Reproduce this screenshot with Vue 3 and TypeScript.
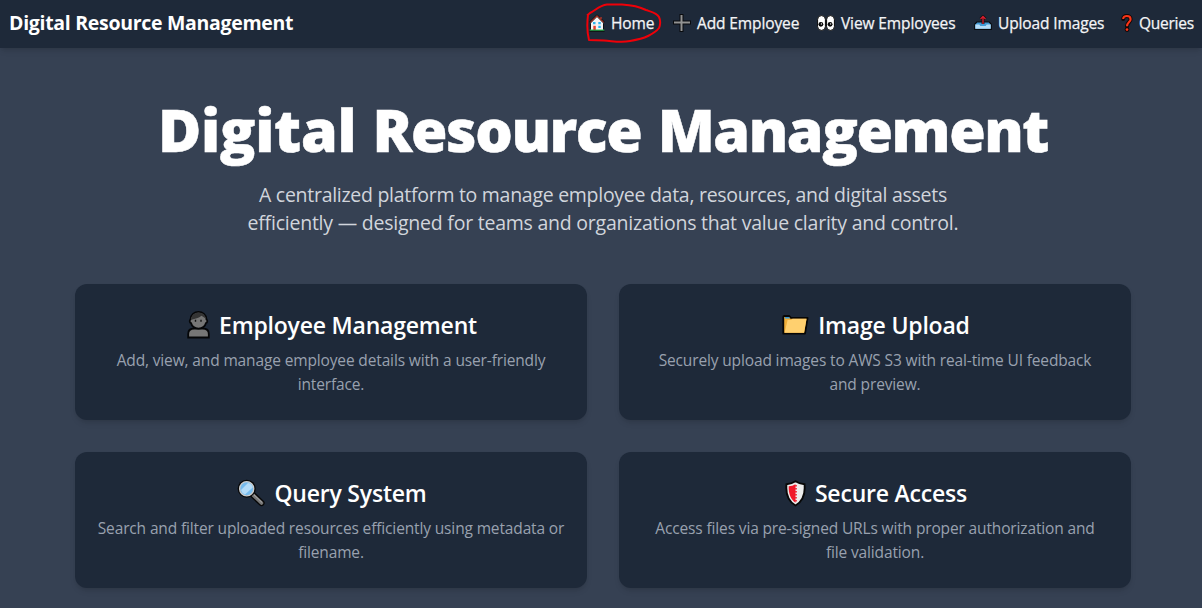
<script setup lang="ts">
interface NavItem {
  icon: string
  label: string
}
interface Card {
  icon: string
  title: string
  lines: string[]
}

const navItems: NavItem[] = [
  { icon: 'home', label: 'Home' },
  { icon: 'plus', label: 'Add Employee' },
  { icon: 'eyes', label: 'View Employees' },
  { icon: 'upload', label: 'Upload Images' },
  { icon: 'question', label: 'Queries' },
]

const cards: Card[] = [
  {
    icon: 'person',
    title: 'Employee Management',
    lines: ['Add, view, and manage employee details with a user-friendly', 'interface.'],
  },
  {
    icon: 'folder',
    title: 'Image Upload',
    lines: ['Securely upload images to AWS S3 with real-time UI feedback', 'and preview.'],
  },
  {
    icon: 'search',
    title: 'Query System',
    lines: ['Search and filter uploaded resources efficiently using metadata or', 'filename.'],
  },
  {
    icon: 'shield',
    title: 'Secure Access',
    lines: ['Access files via pre-signed URLs with proper authorization and', 'file validation.'],
  },
]
</script>

<template>
  <div class="page">
    <header class="nav">
      <div class="brand">Digital Resource Management</div>
      <nav class="links">
        <a v-for="item in navItems" :key="item.label" class="link" :class="item.icon">
          <svg v-if="item.icon === 'home'" width="16" height="18" viewBox="0 0 16 18">
            <path d="M1.2 8.6 8 1.8l6.800 6.800" fill="none" stroke="#111" stroke-width="2.600" stroke-linejoin="round" />
            <path d="M2 9v7h12V9L8 3z" fill="#f4f4f4" />
            <path d="M1.3 8.3 8 1.7l6.7 6.6M12 3v2" fill="none" stroke="#e6402e" stroke-width="1" />
            <path d="M4 8h2.500v2.200H4zM9.300 8h2.500v2.200H9.300zM9.300 11.800h2.500V14H9.300z" fill="#2db4ee" />
            <path d="M4.300 11.800h2.500V16H4.300z" fill="#e6402e" />
            <path d="M.7 16.2h14.6" stroke="#27b34a" stroke-width="1.3" />
            <path d="M.5 17.3h15M1.500 10v5M14.500 10v5" stroke="#111" />
          </svg>
          <svg v-else-if="item.icon === 'plus'" width="18" height="18" viewBox="0 0 18 18">
            <path d="M8.500 0v18M0 8.500h18" stroke="#090b0e" stroke-width="4" />
            <path d="M8.500 1v16M1 8.500h16" stroke="#929292" stroke-width="2" />
          </svg>
          <svg v-else-if="item.icon === 'eyes'" width="18" height="16" viewBox="0 0 18 16">
            <g fill="#fff" stroke="#080808" stroke-width="1">
              <rect x=".6" y=".6" width="7.800" height="14.800" rx="3.900" />
              <rect x="9.600" y=".6" width="7.800" height="14.800" rx="3.900" />
            </g>
            <circle cx="3.900" cy="9.300" r="2.400" fill="#050505" />
            <circle cx="13.100" cy="9.300" r="2.400" fill="#050505" />
            <circle cx="4.400" cy="8.900" r=".7" fill="#fff" />
            <circle cx="13.600" cy="8.900" r=".7" fill="#fff" />
          </svg>
          <svg v-else-if="item.icon === 'upload'" width="18" height="15" viewBox="0 0 18 15">
            <path d="M3 6.800h12l2.300 2.500v5H.7v-5z" fill="#429bd7" stroke="#090b0e" stroke-width="1.200" />
            <path d="M1.300 9.600h4l1 1.400h5.400l1-1.400h4v4.100H1.300z" fill="#b5dcf7" />
            <path d="M9 1.500v7.500M6.500 4 9 1.500 11.500 4" fill="none" stroke="#111" stroke-width="2.800" />
            <path d="M9 1.500V9M6.500 4 9 1.500 11.500 4" fill="none" stroke="#d81d2e" stroke-width="1.300" />
          </svg>
          <svg v-else width="12" height="18" viewBox="0 0 12 18">
            <path d="M2.200 5C2.200 .9 9.600 1 9.600 5.200 9.600 8 6 8.200 6 12.300" fill="none" stroke="#120606" stroke-width="4" stroke-linecap="round" />
            <circle cx="6" cy="15.600" r="2.300" fill="#120606" />
            <path d="M2.200 5C2.200 .9 9.600 1 9.600 5.200 9.600 8 6 8.200 6 12.300" fill="none" stroke="#fb3517" stroke-width="2.100" />
            <circle cx="6" cy="15.600" r="1.350" fill="#fb3517" />
          </svg>
          <span>{{ item.label }}</span>
        </a>
      </nav>
      <svg class="scribble" width="78" height="44" viewBox="0 0 78 44">
        <path d="M1 14.500L4 12C9 10 13 4.500 21 3.500L36 3.500C44 4 52 5 60 9C66 11 71 12 73 16C75 20 74 25 73 27C70 31 66 33 62 35C56 38 50 39 44 40C35 42 27 40 18 39.500L3 39C1 31 1 22 2 14" fill="none" stroke="#f00008" stroke-width="2" stroke-linejoin="round" />
      </svg>
    </header>

    <main class="main">
      <h1 class="hero"><span class="word-a">Digital</span> <span class="word-b">Resource</span> <span class="word-c">Management</span></h1>
      <p class="subtitle">
        <span class="sub-a">A centralized platform to manage employee data, resources, and digital assets</span><br />
        <span class="sub-b">efficiently — designed for teams and organizations that value clarity and control.</span>
      </p>
      <section class="grid">
        <article v-for="card in cards" :key="card.title" class="card" :class="card.icon">
          <h3 class="card-title">
            <svg v-if="card.icon === 'person'" width="23" height="28" viewBox="0 0 23 28">
              <path d="M1.200 26.500V23c0-4 3-5.500 6-5.500h8.600c3 0 6 1.500 6 5.500v3.500z" fill="#767676" stroke="#050608" stroke-width="1.800" />
              <path d="M3.500 8.500C3.500-1.600 19.500-1.600 19.500 8.500c1.200.5 1 3.400-.5 3.600-2 7.300-13 7.300-15 0-1.500-.2-1.700-3.100-.5-3.600z" fill="#767676" stroke="#050608" stroke-width="1.800" />
              <path d="M4.400 8.800C3.800-.6 18-.8 18.700 7.500L14.500 4.800C12 7 8 7.800 4.400 8.800z" fill="#343434" />
              <path d="M8.500 8.800v2M14 8.800v2" stroke="#111" stroke-width="1.400" />
            </svg>
            <svg v-else-if="card.icon === 'folder'" width="27" height="20" viewBox="0 0 27 20">
              <path d="M1.300 18.700V2q0-1 1-1h5l1.600 1.800H25.600L23 18.700z" fill="#f0ae38" stroke="#060606" stroke-width="1.800" stroke-linejoin="round" />
              <path d="M3 2h4l1.200 1.500H3z" fill="#3997d3" />
              <path d="M5.600 5H9l1.500-1.300h14L22 17.800H2.600z" fill="#ffd06f" />
            </svg>
            <svg v-else-if="card.icon === 'search'" width="28" height="28" viewBox="0 0 28 28">
              <path d="m15 15 9.500 9" stroke="#070707" stroke-width="6.200" stroke-linecap="round" />
              <path d="m15 15 9.500 9" stroke="#777" stroke-width="3.600" stroke-linecap="round" />
              <path d="m17 15.800 8 7.600" stroke="#aaa" stroke-width="1" />
              <circle cx="9.700" cy="9.700" r="9" fill="#070707" />
              <circle cx="9.700" cy="9.700" r="7.100" fill="#76bbed" stroke="#ccc" stroke-width="1.300" />
              <path d="m4 11 7-7a6 6 0 0 1 4.700 4.500L8 15.400A6 6 0 0 1 4 11z" fill="#b4dcf8" />
            </svg>
            <svg v-else width="21" height="27" viewBox="0 0 21 27">
              <path d="M10.500 1.300Q14.500 4 19.500 4.200C20.500 14 17.500 21.500 10.500 25.500 3.500 21.500.5 14 1.500 4.200 6.500 4 10.500 1.300 10.500 1.300z" fill="#ececec" stroke="#080808" stroke-width="1.900" />
              <path d="M10.500 4.200V22.800C5.300 19 3.500 13 3.700 6.200Q7.500 6 10.500 4.200z" fill="#f01829" />
              <path d="M11 5v17" stroke="#f01829" stroke-width="1.600" stroke-dasharray="1.500 1.500" />
            </svg>
            <span>{{ card.title }}</span>
          </h3>
          <p class="desc">
            <template v-for="(line, i) in card.lines" :key="line"><br v-if="i > 0" /><span>{{ line }}</span></template>
          </p>
        </article>
      </section>
    </main>
  </div>
</template>

<style>
body {
  background: #364153;
}
</style>

<style scoped>
.page {
  height: 608px;
  overflow: hidden;
  background: #364153;
  color: #fff;
  font-family: 'Open Sans', 'Noto Sans', sans-serif;
}
.nav {
  position: relative;
  height: 48px;
  box-sizing: border-box;
  padding: 0 9px 3px 9px;
  display: flex;
  align-items: center;
  justify-content: space-between;
  background: #1e2939;
  box-shadow: 0 4px 6px -1px rgb(0 0 0 / 0.1), 0 2px 4px -2px rgb(0 0 0 / 0.1);
}
.brand {
  font-size: 19.5px;
  font-weight: 700;
  letter-spacing: -0.3px;
  white-space: nowrap;
}
.links {
  display: flex;
}
.link {
  display: flex;
  align-items: center;
  font-size: 15.5px;
  font-weight: 500;
  color: #f3f4f6;
  white-space: nowrap;
}
.link svg {
  flex: none;
}
.link span {
  letter-spacing: -0.12px;
  -webkit-text-stroke: 0.25px currentColor;
}
.link.home { width: 84px; }
.link.home svg { margin-right: 6px; }
.link.plus { width: 144px; }
.link.plus svg { margin-right: 6px; }
.link.eyes { width: 157px; }
.link.eyes svg { margin-right: 6px; }
.link.upload { width: 147px; }
.link.upload svg { margin-right: 6px; }
.link.question { width: 72px; }
.link.question svg { margin-right: 6px; }
.link.question span { letter-spacing: -0.25px; }
.scribble {
  position: absolute;
  left: 586px;
  top: 1px;
}
.main {
  width: 1056px;
  margin-left: 75px;
  padding-top: 51px;
  text-align: center;
}
.hero {
  margin: 0 0 22px;
  font-size: 59px;
  line-height: 60px;
  font-weight: 800;
  white-space: nowrap;
  word-spacing: 1px;
  -webkit-text-stroke: 0.5px #fff;
}
.word-a {
  letter-spacing: -0.3px;
}
.word-b {
  letter-spacing: -1.4px;
}
.word-c {
  letter-spacing: -1.4px;
}
.subtitle {
  margin: 0 0 47px;
  font-size: 19.5px;
  line-height: 28px;
  color: #d1d5dc;
  white-space: nowrap;
}
.sub-a {
  letter-spacing: -0.28px;
}
.sub-b {
  letter-spacing: -0.23px;
}
.grid {
  display: grid;
  grid-template-columns: 512px 512px;
  gap: 32px;
}
.card {
  height: 136px;
  box-sizing: border-box;
  padding: 25px 0 23px;
  border-radius: 12px;
  background: #1e2939;
  box-shadow: 0 4px 6px -1px rgb(0 0 0 / 0.1), 0 2px 4px -2px rgb(0 0 0 / 0.1);
}
.card-title {
  margin: 0 0 7px;
  padding-left: 2px;
  display: flex;
  align-items: center;
  justify-content: center;
  gap: 9px;
  font-size: 23px;
  line-height: 32px;
  font-weight: 600;
}
.card-title span {
  letter-spacing: -0.2px;
}
.desc {
  margin: 0;
  font-size: 15.5px;
  line-height: 24px;
  color: #99a1af;
  white-space: nowrap;
  letter-spacing: -0.14px;
}
</style>
